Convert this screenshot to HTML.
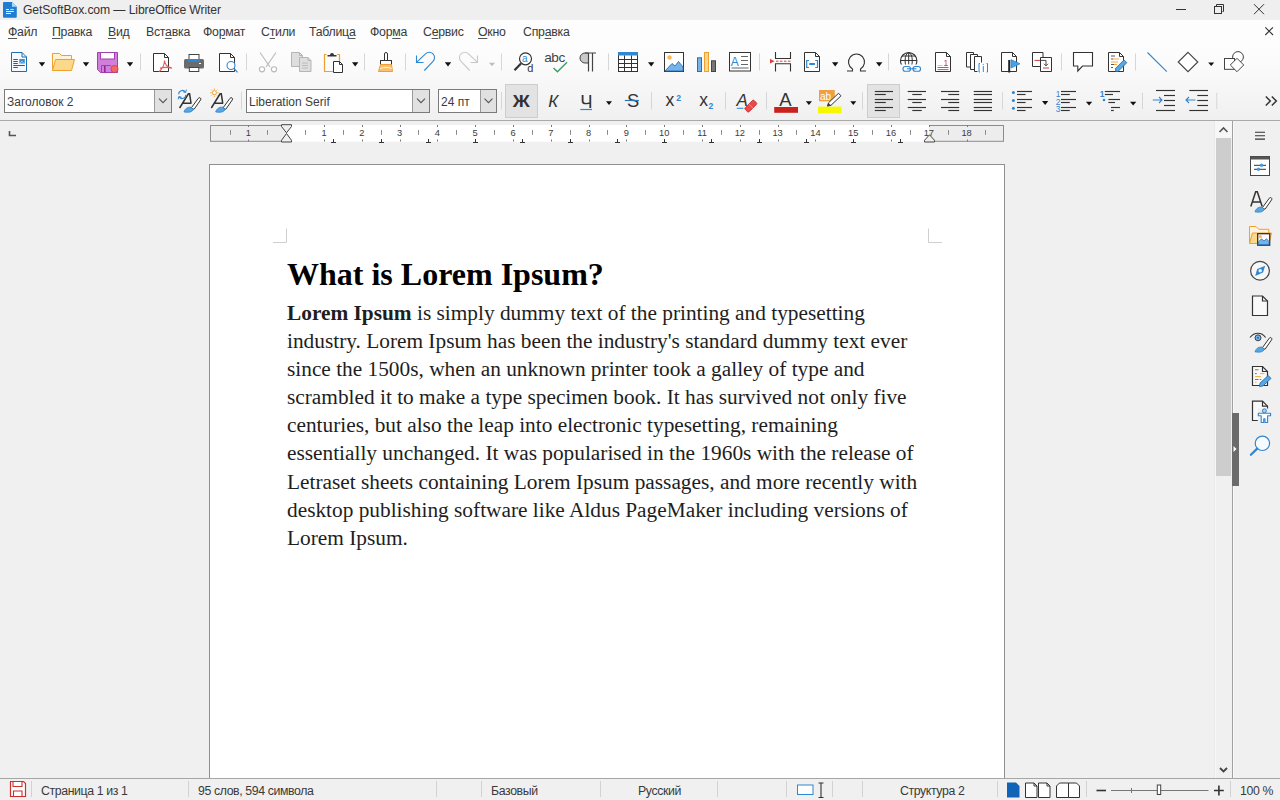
<!DOCTYPE html>
<html><head><meta charset="utf-8">
<style>
*{box-sizing:border-box;margin:0;padding:0}
html,body{width:1280px;height:800px;overflow:hidden;background:#f0f0f0;font-family:"Liberation Sans",sans-serif;color:#333}
.a{position:absolute}
#title{left:0;top:0;width:1280px;height:20px;background:#efefef}
#menu{left:0;top:20px;width:1280px;height:24px;background:#fdfdfd}
#tb{left:0;top:44px;width:1280px;height:76px;background:linear-gradient(#fdfdfd 0px,#fbfbfb 20px,#f0f0f0 76px)}
#tbline{left:0;top:120px;width:1280px;height:1px;background:#aaaaaa}
.ui{font-size:12px;white-space:nowrap;color:#333}
.menu span{position:absolute;top:5px;font-size:12.3px;letter-spacing:-0.25px;color:#3a3a3a;line-height:14px}
.menu u{text-decoration:underline;text-underline-offset:2px;text-decoration-color:#555}
#page{left:209px;top:164px;width:796px;height:620px;background:#fff;border:1px solid #8f8f8f;border-bottom:none}
.doc{font-family:"Liberation Serif",serif;color:#000;white-space:nowrap}
.h{font-size:32px;font-weight:bold}
.body{font-size:21.33px;line-height:28.1px;color:#1e1e1e}
#status{left:0;top:778px;width:1280px;height:22px;background:#f0f0f0;border-top:1px solid #a6a6a6}
.st{position:absolute;top:5px;font-size:12.3px;letter-spacing:-0.38px;color:#3a3a3a;line-height:14px}
#icons{left:0;top:0;width:1280px;height:800px}
</style></head><body>
<div id="title" class="a">
  <svg class="a" style="left:3px;top:2px" width="14" height="16" viewBox="0 0 14 16"><path d="M1 0H9L13.8 4.8V14.8a1 1 0 0 1-1 1H1a1 1 0 0 1-1-1V1a1 1 0 0 1 1-1z" fill="#1f7ed4"/><path d="M9 0V4.8H13.8Z" fill="#a8dcf8"/><path d="M3 7.5H6M3 9.5H10.8M3 11.5H8" stroke="#eaf8ff" stroke-width="1.1"/><path d="M7.3 7.5H10.8" stroke="#b8e4ff" stroke-width="1.1"/></svg>
  <div class="a ui" style="left:23px;top:3px;font-size:12.2px;letter-spacing:-0.12px">GetSoftBox.com — LibreOffice Writer</div>
</div>
<div id="menu" class="a menu">
  <span style="left:8px"><u>Ф</u>айл</span>
  <span style="left:52px"><u>П</u>равка</span>
  <span style="left:108px"><u>В</u>ид</span>
  <span style="left:146px">Вст<u>а</u>вка</span>
  <span style="left:203px">Фо<u>р</u>мат</span>
  <span style="left:261px">С<u>т</u>или</span>
  <span style="left:309px">Таблиц<u>а</u></span>
  <span style="left:370px">Фор<u>м</u>а</span>
  <span style="left:423px">С<u>е</u>рвис</span>
  <span style="left:478px"><u>О</u>кно</span>
  <span style="left:523px">Спр<u>а</u>вка</span>
</div>
<div id="tb" class="a"></div>
<div id="tbline" class="a"></div>

<div id="page" class="a"></div>
<div class="a doc h" style="left:287px;top:256px">What is Lorem Ipsum?</div>
<div class="a doc body" style="left:287px;top:299px">
<b>Lorem Ipsum</b> is simply dummy text of the printing and typesetting<br>
industry. Lorem Ipsum has been the industry's standard dummy text ever<br>
since the 1500s, when an unknown printer took a galley of type and<br>
scrambled it to make a type specimen book. It has survived not only five<br>
centuries, but also the leap into electronic typesetting, remaining<br>
essentially unchanged. It was popularised in the 1960s with the release of<br>
Letraset sheets containing Lorem Ipsum passages, and more recently with<br>
desktop publishing software like Aldus PageMaker including versions of<br>
Lorem Ipsum.
</div>

<div id="status" class="a">
  <span class="st" style="left:41px">Страница 1 из 1</span>
  <span class="st" style="left:198px">95 слов, 594 символа</span>
  <span class="st" style="left:491px">Базовый</span>
  <span class="st" style="left:638px">Русский</span>
  <span class="st" style="left:900px">Структура 2</span>
  <span class="st" style="left:1240px">100 %</span>
</div>
<svg id="icons" class="a" width="1280" height="800" viewBox="0 0 1280 800"><path d="M11.5 52.5H22.0L26.5 57.0V71.5H11.5Z" fill="#f4faff" stroke="#1f6fae" stroke-width="1"/><path d="M22.0 52.5V57.0H26.5" fill="none" stroke="#1f6fae" stroke-width="1"/><path d="M13.3 59.5h4.5M13.3 61.5h4.5M13.3 63.5h4.5M13.3 65.5h11.5M13.3 67.5h4.5" stroke="#1a5f98" stroke-width="1"/><rect x="19.3" y="59" width="5.5" height="4.5" fill="#3d8fd0"/><path d="M20 63.2l1.8-2l1.5 1.5" stroke="#bfe3ff" stroke-width="0.8" fill="none"/><path d="M38.8 62.2h6.4l-3.2 4.2z" fill="#111"/><path d="M52.5 70.5V53.5h7l2 2h10v4" fill="#fff3d6" stroke="#f0a030" stroke-width="1"/><path d="M52.5 70.5L55.5 59.5H74.5L71.5 70.5Z" fill="#fbd88a" stroke="#f0a030" stroke-width="1"/><path d="M82.8 62.2h6.4l-3.2 4.2z" fill="#111"/><path d="M97.5 52.5H117.5V72.5H100.5L97.5 69.5Z" fill="#d27fdc" stroke="#a23fb0" stroke-width="1"/><rect x="100.5" y="52.5" width="14" height="6.5" fill="#fff" stroke="#a23fb0" stroke-width="1"/><path d="M101.5 72.5V65.5H111" fill="none" stroke="#a23fb0" stroke-width="1"/><path d="M104.8 66v6.5" stroke="#8a2a98" stroke-width="1.6"/><circle cx="114.5" cy="69" r="3.6" fill="#f06767" stroke="#d23c3c" stroke-width="0.8"/><path d="M126.8 62.2h6.4l-3.2 4.2z" fill="#111"/><path d="M140.5 53.5V70.5" stroke="#d6d6d6" stroke-width="1"/><path d="M153.5 53.5H164.5L168.5 57.5V71.5H153.5Z" fill="#fff" stroke="#333" stroke-width="1"/><path d="M164.5 53.5V57.5H168.5" fill="none" stroke="#333" stroke-width="1"/><path d="M164.5 60.5c0.3 3.5-2.5 8.5-5.5 11.3M164.5 60.5c0.2 3.5 2.8 7 7 7.3M160 68.2c3.5-1 7.5-1.2 12 0" fill="none" stroke="#e05a5a" stroke-width="1.2"/><rect x="189" y="54.5" width="10" height="5" fill="#fff" stroke="#444" stroke-width="1"/><rect x="184" y="59" width="20" height="9.5" rx="1.5" fill="#6b6b6b"/><rect x="187.7" y="59" width="12.3" height="2.7" fill="#2f86d1"/><rect x="189.3" y="67.5" width="9.5" height="4" fill="#fff" stroke="#444" stroke-width="1"/><rect x="199" y="63" width="2" height="1" fill="#fff"/><path d="M219.5 53.5H230.5L234.5 57.5V71.5H219.5Z" fill="#fff" stroke="#333" stroke-width="1"/><path d="M230.5 53.5V57.5H234.5" fill="none" stroke="#333" stroke-width="1"/><circle cx="231" cy="65.5" r="4" fill="#fff" stroke="#2f86d1" stroke-width="1.1"/><path d="M234 68.5l3.5 3.8" stroke="#2f86d1" stroke-width="1.2"/><path d="M246.5 53.5V70.5" stroke="#d6d6d6" stroke-width="1"/><path d="M260 52.5l10 14.5M276 52.5l-10 14.5" stroke="#b9b9b9" stroke-width="1.1"/><circle cx="262" cy="69.3" r="2.6" fill="#fff" stroke="#b9b9b9" stroke-width="1.1"/><circle cx="274" cy="69.3" r="2.6" fill="#fff" stroke="#b9b9b9" stroke-width="1.1"/><path d="M291.5 52.5H299.5L302.5 55.5V66.5H291.5Z" fill="#dedede" stroke="#b5b5b5" stroke-width="1"/><path d="M299.5 52.5V55.5H302.5" fill="none" stroke="#b5b5b5" stroke-width="1"/><path d="M299.5 57.5H308L311 60.5V71.5H299.5Z" fill="#dedede" stroke="#b5b5b5" stroke-width="1"/><path d="M308 57.5V60.5H311" fill="none" stroke="#b5b5b5" stroke-width="1"/><path d="M302 63h6M302 65.5h6M302 68h6" stroke="#b5b5b5" stroke-width="0.8"/><path d="M326.5 54.5H324.5V71.5H333M337 54.5H339.5V61" fill="none" stroke="#f0a030" stroke-width="1.2"/><path d="M327.5 56.5h9v-1.5h-2.5a2 2 0 0 0-4 0h-2.5z" fill="#333"/><path d="M333.5 61.5H339.5L342.5 64.5V72.5H333.5Z" fill="#fff" stroke="#333" stroke-width="1"/><path d="M339.5 61.5V64.5H342.5" fill="none" stroke="#333" stroke-width="1"/><path d="M352 62.2h6.4l-3.2 4.2z" fill="#111"/><path d="M364.5 53.5V70.5" stroke="#d6d6d6" stroke-width="1"/><path d="M384.5 60V54a1.5 1.5 0 0 1 3 0V60" fill="#fff" stroke="#333" stroke-width="1"/><rect x="380.5" y="60.5" width="11" height="4" fill="#fff" stroke="#333" stroke-width="1"/><path d="M380.5 64.5H391.5L392.5 71.5H378.5Z" fill="#f8c070" stroke="#f0a030" stroke-width="1"/><path d="M380 68.5c4-1.5 8-1.5 12 0" stroke="#fff" stroke-width="0.8" fill="none"/><path d="M405.5 53.5V70.5" stroke="#d6d6d6" stroke-width="1"/><path d="M416.5 55.5V62.5H423.5" fill="none" stroke="#2f86d1" stroke-width="1.1"/><path d="M416.8 62.2L425.5 53.8A5.3 5.3 0 0 1 433 61.3L424.3 70.5" fill="none" stroke="#2f86d1" stroke-width="1.1"/><path d="M444.8 62.2h6.4l-3.2 4.2z" fill="#111"/><path d="M477.5 55.5V62.5H470.5" fill="none" stroke="#c9c9c9" stroke-width="1.1"/><path d="M477.2 62.2L468.5 53.8A5.3 5.3 0 0 0 461 61.3L469.7 70.5" fill="none" stroke="#c9c9c9" stroke-width="1.1"/><path d="M489 62.8h6l-3.0 3.4z" fill="#bdbdbd"/><path d="M501.5 53.5V70.5" stroke="#d6d6d6" stroke-width="1"/><circle cx="525.5" cy="58.8" r="6" fill="#fff" stroke="#333" stroke-width="1.2"/><path d="M521 63.5l-6.5 6.8" stroke="#333" stroke-width="2.2"/><text x="522" y="62" font-size="10" fill="#2f86d1" font-family="Liberation Sans">a</text><text x="527.2" y="71.5" font-size="11" fill="#333" font-family="Liberation Sans">d</text><text x="544.3" y="61.8" font-size="13.6" fill="#444" font-family="Liberation Sans" letter-spacing="-0.5">abc</text><path d="M553.5 68L557.4 71.8L567 62.3" fill="none" stroke="#3aa05e" stroke-width="1.4"/><path d="M588.5 53H585a5 5 0 0 0 0 10h3.5Z" fill="#c9c9c9" stroke="#444" stroke-width="1"/><path d="M588.5 53V71.5M592.5 53V71.5M585 53H596" stroke="#444" stroke-width="1.2"/><path d="M608.5 53.5V70.5" stroke="#d6d6d6" stroke-width="1"/><rect x="618.5" y="52.5" width="19" height="19" fill="#fff" stroke="#333" stroke-width="1"/><rect x="618" y="52" width="20" height="3.5" fill="#2f86d1"/><path d="M618.5 59.5h19M618.5 63.5h19M618.5 67.5h19M624.5 55.5v16M631.5 55.5v16" stroke="#333" stroke-width="1"/><path d="M648 62.2h6.4l-3.2 4.2z" fill="#111"/><rect x="664.5" y="52.5" width="19" height="19" fill="#fff" stroke="#333" stroke-width="1"/><circle cx="669.5" cy="57.5" r="1.8" fill="#f8c060" stroke="#f0a030" stroke-width="0.7"/><path d="M665 71L672 63.5L675 66L678.5 61.5L683 67V71Z" fill="#74b4ea" stroke="#2a6fb0" stroke-width="0.9"/><rect x="697.5" y="57.8" width="4" height="13.7" fill="#74b4ea" stroke="#2a6fb0" stroke-width="1"/><rect x="704.5" y="52.5" width="4" height="19" fill="#fbd88a" stroke="#f0a030" stroke-width="1"/><rect x="711.5" y="60.8" width="4" height="10.7" fill="#777" stroke="#444" stroke-width="1"/><rect x="729.5" y="52.5" width="21" height="18.5" fill="#fff" stroke="#333" stroke-width="1"/><text x="730.8" y="65.5" font-size="12" fill="#2f86d1" font-family="Liberation Sans">A</text><path d="M741 56.5h7M741 60.5h7M741 64.5h7M731.5 68h17" stroke="#555" stroke-width="0.9"/><path d="M759.5 53.5V70.5" stroke="#d6d6d6" stroke-width="1"/><path d="M775.5 52V58.5H790.5V52M775.5 71.5V63.8H790.5V71.5" fill="none" stroke="#333" stroke-width="1.1"/><path d="M776 61.2H791" stroke="#e23b3b" stroke-width="1" stroke-dasharray="2.5 1.5"/><path d="M770 58.8L774.5 61.2L770 63.6Z" fill="#e23b3b"/><path d="M804.5 52.5H815.5L819.5 56.5V71.5H804.5Z" fill="#fff" stroke="#333" stroke-width="1"/><path d="M815.5 52.5V56.5H819.5" fill="none" stroke="#333" stroke-width="1"/><path d="M809 60.5h-2.3v7h2.3M815.2 60.5h2.3v7h-2.3" fill="none" stroke="#2f86d1" stroke-width="1.2"/><path d="M809.3 64h5.6" stroke="#2f86d1" stroke-width="2"/><path d="M832 62.2h6.4l-3.2 4.2z" fill="#111"/><path d="M847 71h5.5v-2a8 8 0 1 1 8 0v2H866" fill="none" stroke="#333" stroke-width="1.1"/><path d="M876 62.2h6.4l-3.2 4.2z" fill="#111"/><path d="M888.5 53.5V70.5" stroke="#d6d6d6" stroke-width="1"/><clipPath id="gc"><rect x="898" y="50" width="22" height="14.6"/></clipPath><g clip-path="url(#gc)"><circle cx="908.7" cy="60.8" r="8.2" fill="#fff" stroke="#333" stroke-width="1.1"/><ellipse cx="908.7" cy="60.8" rx="3.6" ry="8.2" fill="none" stroke="#333" stroke-width="1"/><path d="M900.5 60.5h16.4M902 56h13.4M908.7 52.5v12" stroke="#333" stroke-width="1"/></g><rect x="903" y="66.5" width="7.5" height="4.7" rx="2.3" fill="#fff" stroke="#2f86d1" stroke-width="1.1"/><rect x="913" y="66.5" width="7.5" height="4.7" rx="2.3" fill="#fff" stroke="#2f86d1" stroke-width="1.1"/><path d="M907 68.8h9.5" stroke="#2f86d1" stroke-width="1.1"/><path d="M935.5 52.5H946.5L950.5 56.5V71.5H935.5Z" fill="#fff" stroke="#333" stroke-width="1"/><path d="M946.5 52.5V56.5H950.5" fill="none" stroke="#333" stroke-width="1"/><text x="943.5" y="65.5" font-size="8.5" fill="#d23c3c" font-family="Liberation Sans">1</text><path d="M937.5 67.5h11M937.5 69.6h11" stroke="#d23c3c" stroke-width="0.9"/><path d="M937.5 65.5h5" stroke="#d9a0a0" stroke-width="0.7"/><path d="M966.5 52.5h7v14.5h-7z" fill="#fff" stroke="#333" stroke-width="1"/><path d="M970.5 54.5h7v15h-7z" fill="#fff" stroke="#333" stroke-width="1"/><path d="M974.5 56.5h7v15h-7z" fill="#fff" stroke="#333" stroke-width="1"/><rect x="977.5" y="62.5" width="11" height="10" fill="#fff"/><path d="M980 63.5h-1v8.5h1M986.5 63.5h1v8.5h-1M983.3 66v6" fill="none" stroke="#2f86d1" stroke-width="1"/><circle cx="983.3" cy="64.3" r="0.6" fill="#2f86d1"/><path d="M1001.5 52.5H1012.5L1016.5 56.5V71.5H1001.5Z" fill="#fff" stroke="#333" stroke-width="1"/><path d="M1012.5 52.5V56.5H1016.5" fill="none" stroke="#333" stroke-width="1"/><rect x="1008.2" y="60" width="2" height="12.5" fill="#222"/><path d="M1011 59.6L1020 63.8L1011 68Z" fill="#4aa0e6" stroke="#2f86d1" stroke-width="0.8"/><path d="M1032.5 52.5h10.5v14h-10.5z" fill="#fff" stroke="#333" stroke-width="1"/><path d="M1040.5 57.5h11v14h-11z" fill="#fff" stroke="#333" stroke-width="1"/><path d="M1034.5 60.4h5.5" stroke="#d23c3c" stroke-width="1"/><path d="M1043 68h6" stroke="#d23c3c" stroke-width="1"/><path d="M1041 60.4h5v5.5M1044 63.8l2 2l2-2" fill="none" stroke="#333" stroke-width="0.9"/><path d="M1061.5 53.5V70.5" stroke="#d6d6d6" stroke-width="1"/><path d="M1073.5 52.5H1092.5V66H1082.5L1077.8 71V66H1073.5Z" fill="#fff" stroke="#333" stroke-width="1.1"/><path d="M1108.5 52.5H1119.5L1123.5 56.5V71.5H1108.5Z" fill="#fff" stroke="#333" stroke-width="1"/><path d="M1119.5 52.5V56.5H1123.5" fill="none" stroke="#333" stroke-width="1"/><path d="M1111 56h4M1111 59h2.5M1111 64.5h3M1111 67.5h2" stroke="#444" stroke-width="0.9"/><path d="M1114 59h5M1111 62h7M1114 64.5h3" stroke="#f0a030" stroke-width="0.9"/><path d="M1116 71.5l-0.8-2.8l8.8-8.8l2.8 2.8l-8.8 8.8z" fill="#5aa6df" stroke="#2a6fb0" stroke-width="0.9"/><path d="M1135.5 53.5V70.5" stroke="#d6d6d6" stroke-width="1"/><path d="M1147.5 52.5L1166.8 71.7" stroke="#2f86d1" stroke-width="1.1"/><path d="M1188 52.3L1197.8 62L1188 71.7L1178.2 62Z" fill="#fff" stroke="#444" stroke-width="1.1"/><path d="M1208.2 62.6h6l-3.0 3.5z" fill="#111"/><circle cx="1238" cy="57" r="5.4" fill="#fff" stroke="#444" stroke-width="1"/><rect x="1224.5" y="58.5" width="10" height="10.8" fill="#fff" stroke="#444" stroke-width="1"/><path d="M1237 58.3L1243.7 65L1237 71.7L1230.3 65Z" fill="#fff" stroke="#444" stroke-width="1"/><rect x="4.5" y="89.5" width="167" height="23" fill="#fff" stroke="#7a7a7a" stroke-width="1"/><rect x="155" y="90" width="16" height="22" fill="#e1e1e1"/><path d="M154.5 90V112" stroke="#9a9a9a" stroke-width="1"/><path d="M159.0 98.7l4 4l4-4" fill="none" stroke="#555" stroke-width="1.1"/><text x="7" y="106" font-size="12" fill="#3c3c3c" font-family="Liberation Sans">Заголовок 2</text><path d="M179.6 108L188.4 93.8H189.6L191 103M183.2 103.2H191.5" fill="none" stroke="#333" stroke-width="1.5"/><path d="M191.3 107.9L198.3 98.3a1.4 1.4 0 0 1 2.3 1.6L194 109.4Z" fill="#fff" stroke="#333" stroke-width="1"/><path d="M184 111.9c1-3 3.5-5.2 7-4.6l2.3 1.9c-0.8 3-4.6 3.5-9.3 2.7z" fill="#5aa6df" stroke="#2f86d1" stroke-width="0.9"/><path d="M178.7 94.3a3.6 3.6 0 0 1 6.6 -2.2M185.8 94.7a3.6 3.6 0 0 1 -6.6 2.2" fill="none" stroke="#2f86d1" stroke-width="1.1"/><path d="M186.3 89.6l-0.6 2.9l-2.8-0.8M178.2 99.4l0.6-2.9l2.8 0.8" fill="none" stroke="#2f86d1" stroke-width="1"/><path d="M211.3 108L220.1 93.8H221.3L222.7 103M214.9 103.2H223.2" fill="none" stroke="#333" stroke-width="1.5"/><path d="M223.0 107.9L230.0 98.3a1.4 1.4 0 0 1 2.3 1.6L225.7 109.4Z" fill="#fff" stroke="#333" stroke-width="1"/><path d="M215.7 111.9c1-3 3.5-5.2 7-4.6l2.3 1.9c-0.8 3-4.6 3.5-9.3 2.7z" fill="#5aa6df" stroke="#2f86d1" stroke-width="0.9"/><circle cx="214.4" cy="92.7" r="2" fill="#fff" stroke="#f0a030" stroke-width="1"/><path d="M214.4 88.5v1.3M214.4 95.6v1.3M210.2 92.7h1.3M217.3 92.7h1.3M211.4 89.7l0.9 0.9M216.5 94.8l0.9 0.9M217.4 89.7l-0.9 0.9M212.3 94.8l-0.9 0.9" stroke="#f0a030" stroke-width="0.9"/><path d="M241.5 92V109.5" stroke="#d6d6d6" stroke-width="1"/><rect x="246.5" y="89.5" width="183" height="23" fill="#fff" stroke="#7a7a7a" stroke-width="1"/><rect x="413" y="90" width="16" height="22" fill="#e1e1e1"/><path d="M412.5 90V112" stroke="#9a9a9a" stroke-width="1"/><path d="M417.0 98.7l4 4l4-4" fill="none" stroke="#555" stroke-width="1.1"/><text x="249" y="106" font-size="12" fill="#3c3c3c" font-family="Liberation Sans">Liberation Serif</text><rect x="438.5" y="89.5" width="58" height="23" fill="#fff" stroke="#7a7a7a" stroke-width="1"/><rect x="481" y="90" width="15" height="22" fill="#e1e1e1"/><path d="M480.5 90V112" stroke="#9a9a9a" stroke-width="1"/><path d="M484.5 98.7l4 4l4-4" fill="none" stroke="#555" stroke-width="1.1"/><text x="441" y="106" font-size="12" fill="#3c3c3c" font-family="Liberation Sans">24 пт</text><path d="M501.5 92V109.5" stroke="#d6d6d6" stroke-width="1"/><rect x="505.5" y="84.5" width="32" height="33" fill="#e3e3e3" stroke="#cdcdcd" stroke-width="1"/><text x="512.8" y="107.3" font-size="17" font-weight="bold" fill="#333" font-family="Liberation Sans" textLength="17" lengthAdjust="spacingAndGlyphs">Ж</text><text x="548.3" y="107.3" font-size="17" font-style="italic" fill="#333" font-family="Liberation Sans">К</text><text x="580.2" y="107.6" font-size="18.5" fill="#333" font-family="Liberation Sans">Ч</text><path d="M580.3 109.5H592" stroke="#2f86d1" stroke-width="1.2"/><path d="M606 101.3h6l-3.0 3.6z" fill="#111"/><text x="627" y="107.4" font-size="18.3" fill="#333" font-family="Liberation Sans">S</text><path d="M624.8 100.5H639" stroke="#2a78b8" stroke-width="1.2"/><path d="M651.5 92V109.5" stroke="#d6d6d6" stroke-width="1"/><text x="665.6" y="105.8" font-size="17.5" fill="#333" font-family="Liberation Sans">x</text><text x="676.2" y="100.6" font-size="8.6" font-weight="bold" fill="#2f86d1" font-family="Liberation Sans">2</text><text x="699.2" y="105.8" font-size="17.5" fill="#333" font-family="Liberation Sans">x</text><text x="708.6" y="108.5" font-size="8.6" font-weight="bold" fill="#2f86d1" font-family="Liberation Sans">2</text><path d="M725.5 92V109.5" stroke="#d6d6d6" stroke-width="1"/><text x="736.6" y="105.8" font-size="17" font-style="italic" fill="#333" font-family="Liberation Sans">A</text><path d="M736.8 108.3h6.6" stroke="#2f86d1" stroke-width="1"/><rect x="-2.8" y="-6.3" width="5.6" height="12.6" rx="1.2" transform="translate(750.8 106.1) rotate(45)" fill="#ea4a4a" stroke="#c62828" stroke-width="0.8"/><path d="M748.7 103.9l4.3 4.3" stroke="#fff" stroke-width="0.6" opacity="0.6"/><path d="M766.5 92V109.5" stroke="#d6d6d6" stroke-width="1"/><text x="779.3" y="105.8" font-size="18.5" fill="#333" font-family="Liberation Sans">A</text><rect x="774.2" y="107" width="23.8" height="5.8" fill="#c9211e"/><path d="M805.8 101.3h6.2l-3.1 3.6z" fill="#111"/><rect x="819" y="90" width="15.8" height="11.3" fill="#f0a040"/><text x="820" y="99.8" font-size="10" fill="#fff" font-family="Liberation Sans">ab</text><path d="M827.5 106.3l1-3.5l10-9.5l2.5 2.5l-10 9.5z" fill="#fff" stroke="#333" stroke-width="1"/><path d="M827 106.6l1.5-3.5l2 2z" fill="#333"/><rect x="818" y="106.6" width="23.5" height="6.7" fill="#f7f700"/><path d="M850.3 101.3h6l-3.0 3.6z" fill="#111"/><path d="M862.5 92V109.5" stroke="#d6d6d6" stroke-width="1"/><rect x="867.5" y="84.5" width="32" height="33" fill="#e3e3e3" stroke="#cdcdcd" stroke-width="1"/><path d="M874.8 91.5H893" stroke="#333" stroke-width="1.15"/><path d="M874.8 94.5H885.8" stroke="#333" stroke-width="1.15"/><path d="M874.8 99.5H893" stroke="#333" stroke-width="1.15"/><path d="M874.8 102.5H885.8" stroke="#333" stroke-width="1.15"/><path d="M874.8 107.5H893" stroke="#333" stroke-width="1.15"/><path d="M874.8 110.5H885.8" stroke="#333" stroke-width="1.15"/><path d="M907.7 91.5H926" stroke="#333" stroke-width="1.15"/><path d="M912.3 94.5H921.7" stroke="#333" stroke-width="1.15"/><path d="M907.7 99.5H926" stroke="#333" stroke-width="1.15"/><path d="M912.3 102.5H921.7" stroke="#333" stroke-width="1.15"/><path d="M907.7 107.5H926" stroke="#333" stroke-width="1.15"/><path d="M912.3 110.5H921.7" stroke="#333" stroke-width="1.15"/><path d="M941 91.5H959.2" stroke="#333" stroke-width="1.15"/><path d="M948.3 94.5H959.2" stroke="#333" stroke-width="1.15"/><path d="M941 99.5H959.2" stroke="#333" stroke-width="1.15"/><path d="M948.3 102.5H959.2" stroke="#333" stroke-width="1.15"/><path d="M941 107.5H959.2" stroke="#333" stroke-width="1.15"/><path d="M948.3 110.5H959.2" stroke="#333" stroke-width="1.15"/><path d="M973.7 91.5H992" stroke="#333" stroke-width="1.15"/><path d="M973.7 94.5H992" stroke="#333" stroke-width="1.15"/><path d="M973.7 99.5H992" stroke="#333" stroke-width="1.15"/><path d="M973.7 102.5H992" stroke="#333" stroke-width="1.15"/><path d="M973.7 107.5H992" stroke="#333" stroke-width="1.15"/><path d="M973.7 110.5H992" stroke="#333" stroke-width="1.15"/><path d="M1002.5 92V109.5" stroke="#d6d6d6" stroke-width="1"/><path d="M1017 91.5H1032" stroke="#333" stroke-width="1.15"/><path d="M1017 94.5H1025.6" stroke="#333" stroke-width="1.15"/><path d="M1017 99.5H1032" stroke="#333" stroke-width="1.15"/><path d="M1017 102.5H1025.6" stroke="#333" stroke-width="1.15"/><path d="M1017 107.5H1032" stroke="#333" stroke-width="1.15"/><path d="M1017 110.5H1025.6" stroke="#333" stroke-width="1.15"/><circle cx="1013.4" cy="92.6" r="1.5" fill="#2f86d1"/><circle cx="1013.4" cy="100.4" r="1.5" fill="#2f86d1"/><circle cx="1013.4" cy="108.3" r="1.5" fill="#2f86d1"/><path d="M1042 101h6.3l-3.15 4z" fill="#111"/><path d="M1061 91.5H1076" stroke="#333" stroke-width="1.15"/><path d="M1061 94.5H1069.8" stroke="#333" stroke-width="1.15"/><path d="M1061 99.5H1076" stroke="#333" stroke-width="1.15"/><path d="M1061 102.5H1069.8" stroke="#333" stroke-width="1.15"/><path d="M1061 107.5H1076" stroke="#333" stroke-width="1.15"/><path d="M1061 110.5H1069.8" stroke="#333" stroke-width="1.15"/><text x="1055.8" y="96.8" font-size="8.4" fill="#2f86d1" font-family="Liberation Sans">1</text><text x="1055.8" y="104.6" font-size="8.4" fill="#2f86d1" font-family="Liberation Sans">2</text><text x="1055.8" y="112.4" font-size="8.4" fill="#2f86d1" font-family="Liberation Sans">3</text><path d="M1086 101.8h6.2l-3.1 3.6z" fill="#111"/><path d="M1104.8 91.5H1120" stroke="#333" stroke-width="1.15"/><path d="M1104.8 94.5H1113" stroke="#333" stroke-width="1.15"/><path d="M1108.4 99.5H1120" stroke="#333" stroke-width="1.15"/><path d="M1108.4 102.5H1115" stroke="#333" stroke-width="1.15"/><path d="M1111 107.5H1120" stroke="#333" stroke-width="1.15"/><path d="M1111 110.5H1113.8" stroke="#333" stroke-width="1.15"/><text x="1099.8" y="96.6" font-size="8.4" font-weight="bold" fill="#2f86d1" font-family="Liberation Sans">1</text><circle cx="1104" cy="100" r="1.3" fill="#2f86d1"/><path d="M1130 101.8h6.3l-3.15 3.6z" fill="#111"/><path d="M1142.5 92.8V109" stroke="#d6d6d6" stroke-width="1"/><path d="M1156 90.5H1175" stroke="#333" stroke-width="1.15"/><path d="M1164 95.5H1175" stroke="#333" stroke-width="1.15"/><path d="M1164 100.5H1175" stroke="#333" stroke-width="1.15"/><path d="M1164 105.5H1175" stroke="#333" stroke-width="1.15"/><path d="M1156 110.5H1175" stroke="#333" stroke-width="1.15"/><path d="M1152.8 100H1162M1159 97l3 3l-3 3" fill="none" stroke="#2f86d1" stroke-width="1.1"/><path d="M1189.3 90.5H1208" stroke="#333" stroke-width="1.15"/><path d="M1197.3 95.5H1208" stroke="#333" stroke-width="1.15"/><path d="M1197.3 100.5H1208" stroke="#333" stroke-width="1.15"/><path d="M1197.3 105.5H1208" stroke="#333" stroke-width="1.15"/><path d="M1189.3 110.5H1208" stroke="#333" stroke-width="1.15"/><path d="M1195.5 100H1186M1189 97l-3 3l3 3" fill="none" stroke="#2f86d1" stroke-width="1.1"/><path d="M1216.8 92.8V109" stroke="#d6d6d6" stroke-width="1"/><path d="M1265.8 96.5l4.5 4.5l-4.5 4.5M1271.8 96.5l4.5 4.5l-4.5 4.5" fill="none" stroke="#333" stroke-width="1.5"/><path d="M9.5 131V135.5H16" fill="none" stroke="#555" stroke-width="1.6"/><rect x="210.5" y="125.5" width="793" height="15.8" fill="#ededed" stroke="#8c8c8c" stroke-width="1"/><rect x="286" y="125" width="643" height="16.8" fill="#fff"/><path d="M286 125.5H929M286 141.3H929" stroke="#fff" stroke-width="1"/><path d="M230.5 130v4.8" stroke="#8a8a8a" stroke-width="1"/><text x="248.4" y="136" font-size="9.3" fill="#3a3a3a" text-anchor="middle" font-family="Liberation Sans">1</text><path d="M248.5 125v2M248.5 139.5v2" stroke="#777" stroke-width="1"/><path d="M267.5 130v4.8" stroke="#8a8a8a" stroke-width="1"/><path d="M305.5 130v4.8" stroke="#8a8a8a" stroke-width="1"/><text x="324.0" y="136" font-size="9.3" fill="#3a3a3a" text-anchor="middle" font-family="Liberation Sans">1</text><path d="M324.5 125v2M324.5 139.5v2" stroke="#777" stroke-width="1"/><path d="M343.5 130v4.8" stroke="#8a8a8a" stroke-width="1"/><text x="361.8" y="136" font-size="9.3" fill="#3a3a3a" text-anchor="middle" font-family="Liberation Sans">2</text><path d="M362.5 125v2M362.5 139.5v2" stroke="#777" stroke-width="1"/><path d="M381.5 130v4.8" stroke="#8a8a8a" stroke-width="1"/><text x="399.6" y="136" font-size="9.3" fill="#3a3a3a" text-anchor="middle" font-family="Liberation Sans">3</text><path d="M400.5 125v2M400.5 139.5v2" stroke="#777" stroke-width="1"/><path d="M418.5 130v4.8" stroke="#8a8a8a" stroke-width="1"/><text x="437.4" y="136" font-size="9.3" fill="#3a3a3a" text-anchor="middle" font-family="Liberation Sans">4</text><path d="M437.5 125v2M437.5 139.5v2" stroke="#777" stroke-width="1"/><path d="M456.5 130v4.8" stroke="#8a8a8a" stroke-width="1"/><text x="475.2" y="136" font-size="9.3" fill="#3a3a3a" text-anchor="middle" font-family="Liberation Sans">5</text><path d="M475.5 125v2M475.5 139.5v2" stroke="#777" stroke-width="1"/><path d="M494.5 130v4.8" stroke="#8a8a8a" stroke-width="1"/><text x="513.0" y="136" font-size="9.3" fill="#3a3a3a" text-anchor="middle" font-family="Liberation Sans">6</text><path d="M513.5 125v2M513.5 139.5v2" stroke="#777" stroke-width="1"/><path d="M532.5 130v4.8" stroke="#8a8a8a" stroke-width="1"/><text x="550.8" y="136" font-size="9.3" fill="#3a3a3a" text-anchor="middle" font-family="Liberation Sans">7</text><path d="M551.5 125v2M551.5 139.5v2" stroke="#777" stroke-width="1"/><path d="M570.5 130v4.8" stroke="#8a8a8a" stroke-width="1"/><text x="588.6" y="136" font-size="9.3" fill="#3a3a3a" text-anchor="middle" font-family="Liberation Sans">8</text><path d="M589.5 125v2M589.5 139.5v2" stroke="#777" stroke-width="1"/><path d="M607.5 130v4.8" stroke="#8a8a8a" stroke-width="1"/><text x="626.4" y="136" font-size="9.3" fill="#3a3a3a" text-anchor="middle" font-family="Liberation Sans">9</text><path d="M626.5 125v2M626.5 139.5v2" stroke="#777" stroke-width="1"/><path d="M645.5 130v4.8" stroke="#8a8a8a" stroke-width="1"/><text x="664.2" y="136" font-size="9.3" fill="#3a3a3a" text-anchor="middle" font-family="Liberation Sans">10</text><path d="M664.5 125v2M664.5 139.5v2" stroke="#777" stroke-width="1"/><path d="M683.5 130v4.8" stroke="#8a8a8a" stroke-width="1"/><text x="702.0" y="136" font-size="9.3" fill="#3a3a3a" text-anchor="middle" font-family="Liberation Sans">11</text><path d="M702.5 125v2M702.5 139.5v2" stroke="#777" stroke-width="1"/><path d="M721.5 130v4.8" stroke="#8a8a8a" stroke-width="1"/><text x="739.8" y="136" font-size="9.3" fill="#3a3a3a" text-anchor="middle" font-family="Liberation Sans">12</text><path d="M740.5 125v2M740.5 139.5v2" stroke="#777" stroke-width="1"/><path d="M759.5 130v4.8" stroke="#8a8a8a" stroke-width="1"/><text x="777.6" y="136" font-size="9.3" fill="#3a3a3a" text-anchor="middle" font-family="Liberation Sans">13</text><path d="M778.5 125v2M778.5 139.5v2" stroke="#777" stroke-width="1"/><path d="M796.5 130v4.8" stroke="#8a8a8a" stroke-width="1"/><text x="815.4" y="136" font-size="9.3" fill="#3a3a3a" text-anchor="middle" font-family="Liberation Sans">14</text><path d="M815.5 125v2M815.5 139.5v2" stroke="#777" stroke-width="1"/><path d="M834.5 130v4.8" stroke="#8a8a8a" stroke-width="1"/><text x="853.2" y="136" font-size="9.3" fill="#3a3a3a" text-anchor="middle" font-family="Liberation Sans">15</text><path d="M853.5 125v2M853.5 139.5v2" stroke="#777" stroke-width="1"/><path d="M872.5 130v4.8" stroke="#8a8a8a" stroke-width="1"/><text x="891.0" y="136" font-size="9.3" fill="#3a3a3a" text-anchor="middle" font-family="Liberation Sans">16</text><path d="M891.5 125v2M891.5 139.5v2" stroke="#777" stroke-width="1"/><path d="M910.5 130v4.8" stroke="#8a8a8a" stroke-width="1"/><text x="928.8" y="136" font-size="9.3" fill="#3a3a3a" text-anchor="middle" font-family="Liberation Sans">17</text><path d="M929.5 125v2M929.5 139.5v2" stroke="#777" stroke-width="1"/><path d="M948.5 130v4.8" stroke="#8a8a8a" stroke-width="1"/><text x="966.6" y="136" font-size="9.3" fill="#3a3a3a" text-anchor="middle" font-family="Liberation Sans">18</text><path d="M967.5 125v2M967.5 139.5v2" stroke="#777" stroke-width="1"/><path d="M985.5 130v4.8" stroke="#8a8a8a" stroke-width="1"/><path d="M333.5 139V142M331 142.5H336" stroke="#333" stroke-width="1"/><path d="M381.5 139V142M379 142.5H384" stroke="#333" stroke-width="1"/><path d="M428.5 139V142M426 142.5H431" stroke="#333" stroke-width="1"/><path d="M475.5 139V142M473 142.5H478" stroke="#333" stroke-width="1"/><path d="M522.5 139V142M520 142.5H525" stroke="#333" stroke-width="1"/><path d="M570.5 139V142M568 142.5H573" stroke="#333" stroke-width="1"/><path d="M617.5 139V142M615 142.5H620" stroke="#333" stroke-width="1"/><path d="M664.5 139V142M662 142.5H667" stroke="#333" stroke-width="1"/><path d="M711.5 139V142M709 142.5H714" stroke="#333" stroke-width="1"/><path d="M759.5 139V142M757 142.5H762" stroke="#333" stroke-width="1"/><path d="M806.5 139V142M804 142.5H809" stroke="#333" stroke-width="1"/><path d="M853.5 139V142M851 142.5H856" stroke="#333" stroke-width="1"/><path d="M900.5 139V142M898 142.5H903" stroke="#333" stroke-width="1"/><path d="M281.5 124.7H291.5V126.5L286.5 132.8L281.5 126.5Z" fill="#f0f0f0" stroke="#444" stroke-width="1"/><path d="M281.5 142H291.5V140.3L286.5 133.5L281.5 140.3Z" fill="#f0f0f0" stroke="#444" stroke-width="1"/><path d="M924.5 142H934.5V140.3L929.5 134.8L924.5 140.3Z" fill="#f0f0f0" stroke="#444" stroke-width="1"/><path d="M286.5 228.5V242.5H273M928.5 228.5V242.5H942" fill="none" stroke="#cfcfcf" stroke-width="1"/><rect x="1215" y="121" width="17" height="17" fill="#f7f7f7"/><path d="M1214.5 121V778" stroke="#e9e9e9" stroke-width="1"/><path d="M1215.5 121V778" stroke="#f8f8f8" stroke-width="1"/><path d="M1233.5 121V778" stroke="#f8f8f8" stroke-width="1"/><path d="M1219.5 132l4-4l4 4" fill="none" stroke="#555" stroke-width="1.6"/><rect x="1216" y="138" width="15" height="338" fill="#cdcdcd"/><path d="M1220 768l3.5 3.5l3.5-3.5" fill="none" stroke="#444" stroke-width="1.8"/><path d="M1232.5 121V778" stroke="#a0a0a0" stroke-width="1"/><rect x="1232" y="413" width="7" height="73" fill="#6b6b6b"/><path d="M1233.5 446v6l3-3z" fill="#fff"/><path d="M1255 132.3h10M1255 135.7h10M1255 139.1h10" stroke="#333" stroke-width="1.1"/><rect x="1250.5" y="156.5" width="19" height="19" fill="#fff" stroke="#444" stroke-width="1"/><rect x="1250.5" y="156.5" width="19" height="3" fill="#555"/><path d="M1254 165.3h12M1254 169.3h12" stroke="#333" stroke-width="1"/><circle cx="1261.5" cy="165.3" r="1.4" fill="#4aa0e6" stroke="#2f86d1" stroke-width="0.6"/><circle cx="1258.5" cy="169.3" r="1.4" fill="#4aa0e6" stroke="#2f86d1" stroke-width="0.6"/><path d="M1250.8 206.5L1255.7 191.8H1257.3L1262.2 206.5M1252.8 202H1260.2" fill="none" stroke="#333" stroke-width="1.5"/><path d="M1262.3 207.8L1269.3 198.2a1.4 1.4 0 0 1 2.3 1.6L1265 209.3Z" fill="#fff" stroke="#333" stroke-width="1"/><path d="M1255 211.8c1-3 3.5-5.2 7-4.6l2.3 1.9c-0.8 3-4.6 3.5-9.3 2.7z" fill="#5aa6df" stroke="#2f86d1" stroke-width="0.9"/><path d="M1249.5 243.5V226.5H1256L1258.8 229.3H1268.8V233" fill="#fdf3e0" stroke="#f0a030" stroke-width="1"/><path d="M1249.5 243.5L1252.4 233H1271.5L1269 243.5Z" fill="#fbd88a" stroke="#f0a030" stroke-width="1"/><rect x="1257.7" y="233.7" width="12" height="11.5" fill="#fff" stroke="#333" stroke-width="1.3"/><circle cx="1260.4" cy="236.6" r="1.2" fill="#f6b060" stroke="#f0a030" stroke-width="0.5"/><path d="M1258.4 244.5V242L1261.5 238.8L1264 241L1266.5 238.8L1269 241.5V244.5Z" fill="#74b4ea" stroke="#2a6fb0" stroke-width="0.8"/><circle cx="1260" cy="270.8" r="9.4" fill="#f7f7f7" stroke="#444" stroke-width="1.2"/><path d="M1265.2 265.7L1263 272.5L1255.2 275.9L1257.2 269Z" fill="#2f86d1"/><circle cx="1260.2" cy="270.8" r="1.8" fill="#e8f4fc"/><path d="M1252.5 296H1262.5L1267.5 301V315.5H1252.5Z" fill="#f9f9f9" stroke="#333" stroke-width="1.2"/><path d="M1262.5 296V301H1267.5" fill="none" stroke="#333" stroke-width="1.2"/><path d="M1250 337.5c4.5-5.6 11.5-5.6 15.6 0" fill="none" stroke="#333" stroke-width="1.1"/><circle cx="1258" cy="337.8" r="3" fill="#74b4ea" stroke="#333" stroke-width="0.9"/><circle cx="1258" cy="337.8" r="1.1" fill="#2f6fb0"/><path d="M1262.3 347.8L1269.3 338.2a1.4 1.4 0 0 1 2.3 1.6L1265 349.3Z" fill="#fff" stroke="#333" stroke-width="1"/><path d="M1255 351.8c1-3 3.5-5.2 7-4.6l2.3 1.9c-0.8 3-4.6 3.5-9.3 2.7z" fill="#5aa6df" stroke="#2f86d1" stroke-width="0.9"/><path d="M1252.5 366.5H1262.5L1267.5 371.5V385.5H1252.5Z" fill="#f9f9f9" stroke="#333" stroke-width="1.2"/><path d="M1262.5 366.5V371.5H1267.5" fill="none" stroke="#333" stroke-width="1.2"/><path d="M1255 369.8h3.5M1255 373.6h1.8M1255 379.5h3.5M1259.8 379.5h1.5" stroke="#666" stroke-width="0.9"/><path d="M1260 373.6h4.5M1255 376.6h6M1255 382.2h1.5" stroke="#f0a030" stroke-width="0.9"/><path d="M1259.5 386.5l0.5-3.4l8.2-7.6l2.8 2.9l-8.1 7.6z" fill="#5aa6df" stroke="#2a6fb0" stroke-width="0.9"/><path d="M1252.5 401.2H1262.5L1267.5 406.2V420.5H1252.5Z" fill="#f9f9f9" stroke="#333" stroke-width="1.2"/><path d="M1262.5 401.2V406.2H1267.5" fill="none" stroke="#333" stroke-width="1.2"/><rect x="1257.8" y="408.5" width="14" height="15" fill="#f0f0f0"/><circle cx="1264.4" cy="410.8" r="2" fill="#a8d2f4" stroke="#2f86d1" stroke-width="1"/><path d="M1258.3 413.3h12.3v2.4h-3v6.8H1265v-3.8h-1.3v3.8h-2.5v-6.8h-2.9Z" fill="#fff" stroke="#2f86d1" stroke-width="1.1" stroke-linejoin="round"/><circle cx="1262.4" cy="443.3" r="7.2" fill="#f7fbff" stroke="#2f86d1" stroke-width="1.2"/><path d="M1257.2 448.6L1250.9 454.8" stroke="#2f86d1" stroke-width="2.2" stroke-linecap="round"/><path d="M10.5 781.5H23.5L25.5 783.5V796.5H10.5Z" fill="#fff" stroke="#c9302c" stroke-width="1.2"/><path d="M13 781.5V786.5H22V781.5M13.5 796.5V791H22V796.5" fill="none" stroke="#c9302c" stroke-width="1.1"/><path d="M31.5 781V797" stroke="#d2d2d2" stroke-width="1"/><path d="M188.5 781V797" stroke="#d2d2d2" stroke-width="1"/><path d="M436.5 781V797" stroke="#d2d2d2" stroke-width="1"/><path d="M481.5 781V797" stroke="#d2d2d2" stroke-width="1"/><path d="M600.5 781V797" stroke="#d2d2d2" stroke-width="1"/><path d="M717.5 781V797" stroke="#d2d2d2" stroke-width="1"/><path d="M786.5 781V797" stroke="#d2d2d2" stroke-width="1"/><path d="M832.5 781V797" stroke="#d2d2d2" stroke-width="1"/><path d="M862.5 781V797" stroke="#d2d2d2" stroke-width="1"/><path d="M997.5 781V797" stroke="#d2d2d2" stroke-width="1"/><path d="M1086.5 781V797" stroke="#d2d2d2" stroke-width="1"/><path d="M1230.5 781V797" stroke="#d2d2d2" stroke-width="1"/><rect x="797.5" y="785" width="15.5" height="9.5" fill="#fff" stroke="#2f86d1" stroke-width="1"/><path d="M821 783.5V797M818.5 783h5M818.5 797.5h5" stroke="#333" stroke-width="1.1"/><path d="M1007 782.5H1016L1019.5 786V797.5H1007Z" fill="#0f64b8"/><path d="M1025.5 783H1034L1037 786V797.5H1025.5Z" fill="#fff" stroke="#333" stroke-width="1"/><path d="M1034 783V786H1037" fill="none" stroke="#333" stroke-width="1"/><path d="M1038.5 783H1047L1050 786V797.5H1038.5Z" fill="#fff" stroke="#333" stroke-width="1"/><path d="M1047 783V786H1050" fill="none" stroke="#333" stroke-width="1"/><path d="M1056.5 797.5V786L1059.5 783H1068.5V797.5ZM1068.5 783H1076.5L1079.5 786V797.5H1068.5" fill="#fff" stroke="#333" stroke-width="1"/><path d="M1096.5 790.5H1106" stroke="#333" stroke-width="1.6"/><path d="M1111 790.5H1208.5" stroke="#777" stroke-width="1"/><path d="M1131.5 788V793" stroke="#777" stroke-width="1"/><rect x="1157.3" y="785" width="3.4" height="9.5" fill="#fff" stroke="#444" stroke-width="1"/><path d="M1214 790.5H1223.8M1218.9 785.6V795.4" stroke="#333" stroke-width="1.6"/><path d="M1176 9.5H1186" stroke="#333" stroke-width="1"/><rect x="1214.5" y="6.5" width="7" height="7" fill="none" stroke="#333" stroke-width="1"/><path d="M1216.5 6V4.5H1223.5V11.5H1222.5" fill="none" stroke="#333" stroke-width="1"/><path d="M1254 4.2L1264 14.2M1264 4.2L1254 14.2" stroke="#333" stroke-width="1"/><path d="M1265.3 27.3L1273 35M1273 27.3L1265.3 35" stroke="#333" stroke-width="1.1"/></svg>
</body></html>
